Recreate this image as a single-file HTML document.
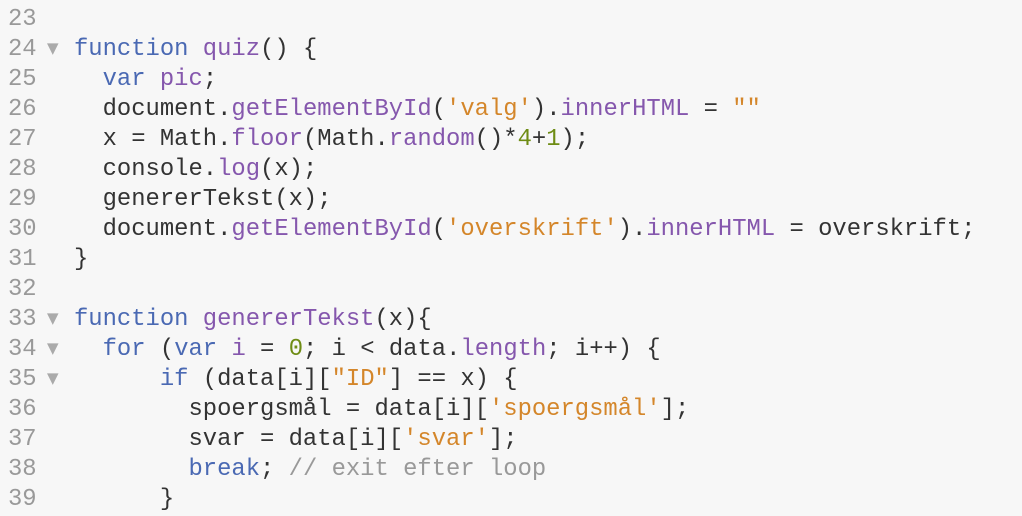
<!DOCTYPE html>
<html><head><meta charset="utf-8"><style>
body{margin:0;background:#f7f7f7;width:1022px;height:516px;overflow:hidden;font-family:"Liberation Mono",monospace;font-size:23.85px;color:#333}
#w{position:absolute;left:0;top:2px;width:1022px}
.l{position:absolute;left:0;height:30px;line-height:30px;white-space:pre}
.n{position:absolute;left:8px;color:#999}
.a{position:absolute;left:47px;top:-2px;color:#aaa;font-size:15px;font-family:"DejaVu Sans",sans-serif}
.c{position:absolute;left:74px}
.k{color:#4a69b3}.p{color:#8557ad}.s{color:#d4862a}.g{color:#6e8c14}.m{color:#999}
</style></head><body><div id="w">
<div class="l" style="top:3px"><span class="n">23</span></div>
<div class="l" style="top:33px"><span class="n">24</span><span class="a">▼</span><span class="c"><span class="k">function</span> <span class="p">quiz</span>() {</span></div>
<div class="l" style="top:63px"><span class="n">25</span><span class="c">  <span class="k">var</span> <span class="p">pic</span>;</span></div>
<div class="l" style="top:93px"><span class="n">26</span><span class="c">  document.<span class="p">getElementById</span>(<span class="s">'valg'</span>).<span class="p">innerHTML</span> = <span class="s">""</span></span></div>
<div class="l" style="top:123px"><span class="n">27</span><span class="c">  x = Math.<span class="p">floor</span>(Math.<span class="p">random</span>()*<span class="g">4</span>+<span class="g">1</span>);</span></div>
<div class="l" style="top:153px"><span class="n">28</span><span class="c">  console.<span class="p">log</span>(x);</span></div>
<div class="l" style="top:183px"><span class="n">29</span><span class="c">  genererTekst(x);</span></div>
<div class="l" style="top:213px"><span class="n">30</span><span class="c">  document.<span class="p">getElementById</span>(<span class="s">'overskrift'</span>).<span class="p">innerHTML</span> = overskrift;</span></div>
<div class="l" style="top:243px"><span class="n">31</span><span class="c">}</span></div>
<div class="l" style="top:273px"><span class="n">32</span></div>
<div class="l" style="top:303px"><span class="n">33</span><span class="a">▼</span><span class="c"><span class="k">function</span> <span class="p">genererTekst</span>(x){</span></div>
<div class="l" style="top:333px"><span class="n">34</span><span class="a">▼</span><span class="c">  <span class="k">for</span> (<span class="k">var</span> <span class="p">i</span> = <span class="g">0</span>; i &lt; data.<span class="p">length</span>; i++) {</span></div>
<div class="l" style="top:363px"><span class="n">35</span><span class="a">▼</span><span class="c">      <span class="k">if</span> (data[i][<span class="s">"ID"</span>] == x) {</span></div>
<div class="l" style="top:393px"><span class="n">36</span><span class="c">        spoergsmål = data[i][<span class="s">'spoergsmål'</span>];</span></div>
<div class="l" style="top:423px"><span class="n">37</span><span class="c">        svar = data[i][<span class="s">'svar'</span>];</span></div>
<div class="l" style="top:453px"><span class="n">38</span><span class="c">        <span class="k">break</span>; <span class="m">// exit efter loop</span></span></div>
<div class="l" style="top:483px"><span class="n">39</span><span class="c">      }</span></div>
</div></body></html>
